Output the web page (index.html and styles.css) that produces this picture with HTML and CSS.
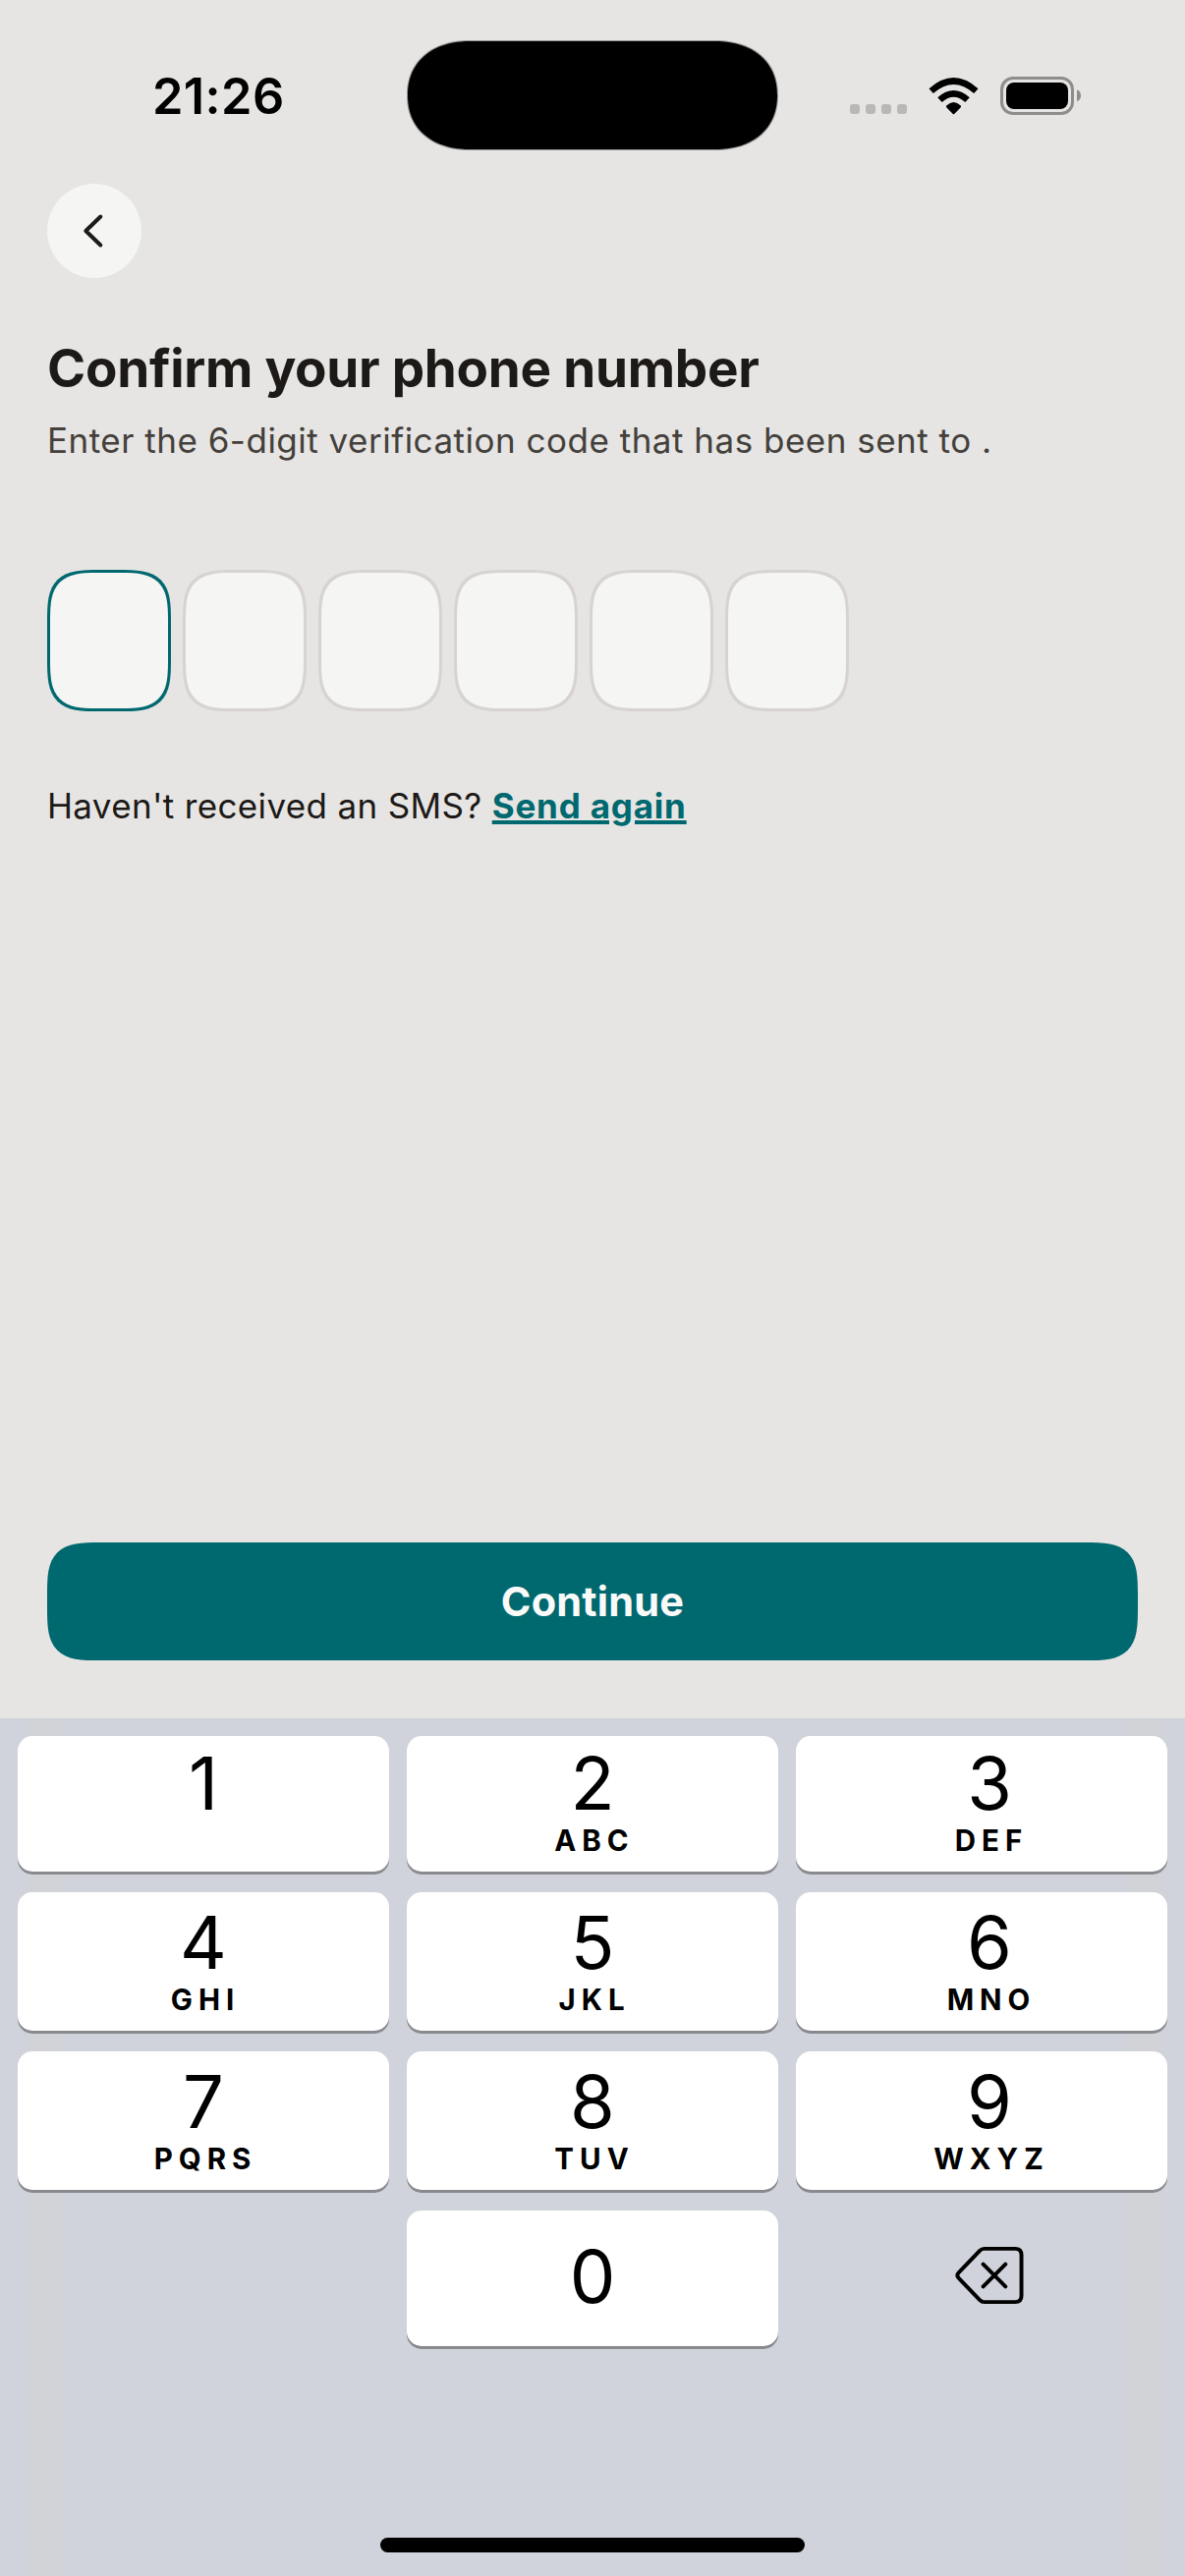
FILE: index.html
```html
<!DOCTYPE html>
<html lang="en">
<head>
<meta charset="utf-8">
<title>Confirm your phone number</title>
<link rel="stylesheet" href="styles.css">
</head>
<body>
<div class="screen">
  <header class="status">
    <div class="status-left"><span class="time">21:26</span></div>
    <div class="island"></div>
    <div class="status-right">
      <div class="dots"><i></i><i></i><i></i><i></i></div>
      <svg class="wifi" viewBox="0 0 51 38" width="51" height="38">
        <path d="M0.5 11.2Q25.5 -11.2 50.5 11.2L46.2 16Q25.5 -2.2 4.8 16Z"/>
        <path d="M9.2 20.2Q25.5 5.8 41.8 20.2L37.3 25Q25.5 14.6 13.7 25Z"/>
        <path d="M18.2 28.6Q25.5 21.6 32.8 28.6Q33.4 29.6 32.6 30.4L26.2 36.9Q25.5 37.4 24.8 36.9L18.4 30.4Q17.6 29.6 18.2 28.6Z"/>
      </svg>
      <svg class="battery" viewBox="0 0 83 39" width="83" height="39">
        <rect x="1.5" y="1.5" width="72" height="36" rx="11.5" fill="none" stroke="#8e8d8c" stroke-width="3"/>
        <rect x="6" y="6" width="63" height="27" rx="8"/>
        <path d="M78 13.2Q82 15 82 19.3T78 25.4Z" fill="#8e8d8c"/>
      </svg>
    </div>
  </header>

  <main class="content">
    <button class="back" aria-label="Back">
      <svg viewBox="0 0 96 96" width="96" height="96"><path d="M54.3 33.5L39.3 48L54.3 62.5" fill="none" stroke="#1c1b19" stroke-width="4" stroke-linecap="round" stroke-linejoin="round"/></svg>
    </button>
    <h1 class="title">Confirm your phone number</h1>
    <p class="subtitle">Enter the 6-digit verification code that has been sent to .</p>
    <div class="code">
      <div class="cell active"></div>
      <div class="cell"></div>
      <div class="cell"></div>
      <div class="cell"></div>
      <div class="cell"></div>
      <div class="cell"></div>
    </div>
    <p class="resend">Haven't received an SMS? <a class="link">Send again</a></p>
    <button class="continue">Continue</button>
  </main>

  <section class="keyboard">
    <div class="keys">
      <div class="key"><span class="digit">1</span></div>
      <div class="key"><span class="digit">2</span><span class="letters">ABC</span></div>
      <div class="key shifted"><span class="digit">3</span><span class="letters">DEF</span></div>
      <div class="key"><span class="digit">4</span><span class="letters">GHI</span></div>
      <div class="key"><span class="digit">5</span><span class="letters">JKL</span></div>
      <div class="key shifted"><span class="digit">6</span><span class="letters">MNO</span></div>
      <div class="key"><span class="digit">7</span><span class="letters">PQRS</span></div>
      <div class="key"><span class="digit">8</span><span class="letters">TUV</span></div>
      <div class="key shifted"><span class="digit">9</span><span class="letters">WXYZ</span></div>
      <div class="blank"></div>
      <div class="key zero"><span class="digit">0</span></div>
      <div class="delete">
        <svg viewBox="0 0 72 60" width="71" height="60" fill="none" stroke="#000" stroke-width="4" stroke-linecap="round" stroke-linejoin="round">
          <path d="M30 2.5H62Q68.5 2.5 68.5 9V51Q68.5 57.5 62 57.5H30Q27.5 57.5 25.5 55.5L3.8 33Q0.8 30 3.8 27L25.5 4.5Q27.5 2.5 30 2.5Z"/>
          <path d="M29 18.5L52 41.5M52 18.5L29 41.5"/>
        </svg>
      </div>
    </div>
    <div class="home"></div>
  </section>
</div>
</body>
</html>
```
FILE: styles.css
```css
* { box-sizing: border-box; }

body {
  margin: 0;
  font-family: Inter, "Liberation Sans", sans-serif;
  background: #e6e5e3;
}

h1, p { margin: 0; }

button {
  border: 0;
  padding: 0;
  font-family: inherit;
}

.screen {
  display: flex;
  flex-direction: column;
  width: 1206px;
  height: 2622px;
  overflow: hidden;
}

/* Status bar */
.status {
  display: flex;
  height: 187px;
  flex: none;
}

.status-left {
  width: 415px;
  padding: 68px 0 0 155px;
}

.time {
  display: block;
  font-size: 50.5px;
  line-height: 60px;
  font-weight: 600;
  letter-spacing: 0.4px;
  color: #000;
  white-space: nowrap;
}

.island {
  width: 376px;
  height: 110px;
  margin-top: 42px;
  background: #000;
  border-radius: 55px;
  box-shadow: 0 0 0 1px rgba(0, 0, 0, 0.35);
}

.status-right {
  display: flex;
  align-items: flex-start;
  padding: 78px 0 0 74px;
}

.dots {
  display: flex;
  gap: 6px;
  margin: 28px 22px 0 0;
}

.dots i {
  width: 10px;
  height: 10px;
  border-radius: 3px;
  background: #b9b8b7;
}

.wifi { margin: 1px 22px 0 0; }

/* Content */
.content {
  display: flex;
  flex-direction: column;
  align-items: flex-start;
  height: 1562px;
  padding: 0 48px;
  flex: none;
}

.back {
  width: 96px;
  height: 96px;
  border-radius: 50%;
  background: #f5f5f3;
}

.back svg { display: block; }

.title {
  margin-top: 60px;
  font-size: 53px;
  line-height: 64px;
  font-weight: 700;
  letter-spacing: -0.26px;
  color: #1c1917;
  white-space: nowrap;
}

.subtitle {
  margin-top: 17px;
  font-size: 35px;
  line-height: 48px;
  color: #44403b;
  letter-spacing: 0.5px;
  white-space: nowrap;
}

.code {
  display: flex;
  gap: 12px;
  margin-top: 108px;
}

.cell {
  width: 126px;
  height: 144px;
  border: 3px solid #d7d3d1;
  border-radius: 38px;
  background: #f5f5f3;
}

.cell.active { border-color: #00686f; }

.resend {
  margin-top: 72px;
  font-size: 35px;
  line-height: 48px;
  color: #1c1917;
  letter-spacing: 0.35px;
  white-space: nowrap;
}

.link {
  font-weight: 700;
  letter-spacing: 0.8px;
  color: #00686f;
  text-decoration: underline;
  text-decoration-thickness: 4px;
  text-underline-offset: 2px;
}

.continue {
  width: 1110px;
  height: 120px;
  margin-top: 726px;
  border-radius: 38px;
  background: #00686f;
  color: #fafaf9;
  font-size: 41.5px;
  font-weight: 700;
  letter-spacing: 0.2px;
}

/* Keyboard */
.keyboard {
  display: flex;
  flex-direction: column;
  align-items: center;
  height: 873px;
  padding: 18px 18px 0;
  background: linear-gradient(90deg, #d0d3db 24px, #d1d3d8 32px, #d1d3d7 50px, #d0d3db 72px, #d0d3db 1146px, #d1d3d7 1153px, #d1d3d7 1172px, #d0d3db 1190px);
}

.keys {
  display: grid;
  grid-template-columns: repeat(3, 378px);
  grid-template-rows: 138px 141px 141px 138px;
  gap: 21px 18px;
}

.key {
  display: flex;
  flex-direction: column;
  align-items: center;
  padding-top: 11px;
  border-radius: 15px;
  background: #fff;
  box-shadow: 0 3px 0 #898a8e;
  color: #000;
}

.key:nth-child(-n+3) { padding-top: 8px; }

.key.shifted { padding-left: 16px; }

.key.zero { padding-top: 27px; }

.digit {
  font-size: 74px;
  line-height: 80px;
}

.letters {
  padding-left: 4px;
  font-size: 29.5px;
  line-height: 36px;
  font-weight: 700;
  letter-spacing: 6px;
}

.delete { padding: 36px 0 0 162px; }

.delete svg { display: block; }

.home {
  width: 432px;
  height: 15px;
  margin-top: 195px;
  border-radius: 7.5px;
  background: #000;
}

/* Continuous corners where the browser can draw them */
@supports (corner-shape: superellipse(1.3)) {
  .island { border-radius: 64px / 55px; corner-shape: superellipse(1.15); }
  .cell, .continue { border-radius: 54px; corner-shape: superellipse(1.7); }
}
```
